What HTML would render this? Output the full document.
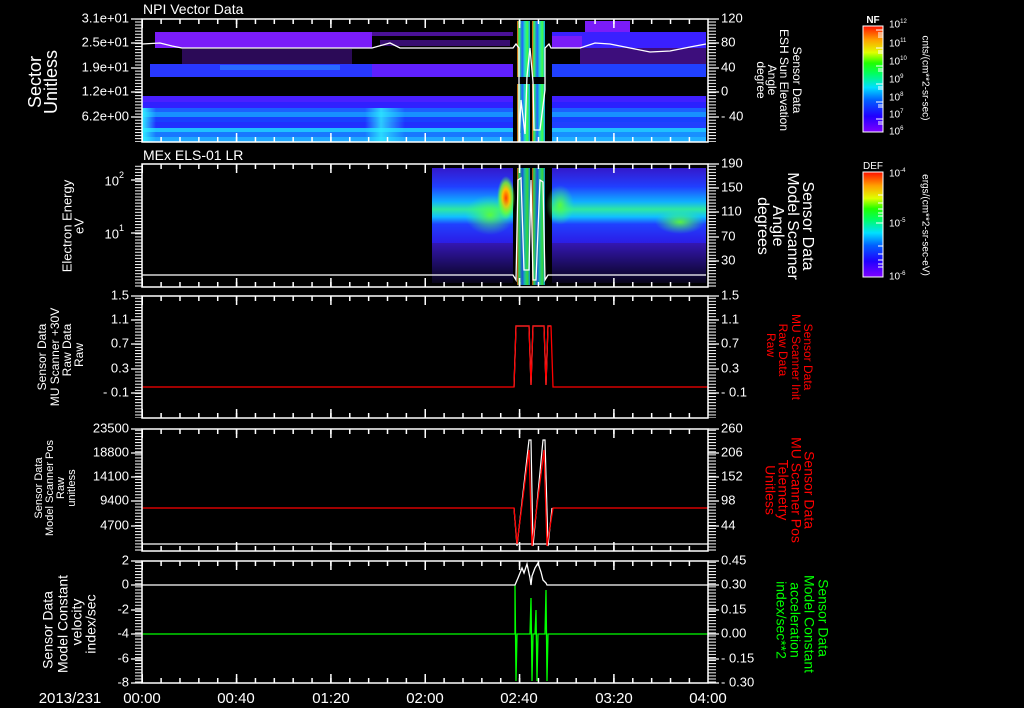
<!DOCTYPE html>
<html><head><meta charset="utf-8"><style>
html,body{margin:0;padding:0;background:#000;}
svg{display:block;}
text{font-family:"Liberation Sans",sans-serif;fill:#fff;}
</style></head><body>
<svg width="1024" height="708" viewBox="0 0 1024 708" xmlns="http://www.w3.org/2000/svg">
<defs>
<pattern id="vt" patternUnits="userSpaceOnUse" x="141.5" y="0" width="18.867" height="20"><rect x="0" y="0" width="1.5" height="20" fill="#fff"/></pattern>
<pattern id="vtM" patternUnits="userSpaceOnUse" x="141.5" y="0" width="94.33" height="20"><rect x="0" y="0" width="1.5" height="20" fill="#fff"/></pattern>
<pattern id="ht" patternUnits="userSpaceOnUse" x="0" y="0" width="20" height="3.07"><rect x="0" y="0" width="20" height="1" fill="#fff"/></pattern>
<linearGradient id="cb" x1="0" y1="1" x2="0" y2="0">
<stop offset="0" stop-color="#8000ff"/><stop offset="0.15" stop-color="#2000ff"/><stop offset="0.3" stop-color="#0060ff"/><stop offset="0.42" stop-color="#00e0ff"/><stop offset="0.55" stop-color="#00ff60"/><stop offset="0.65" stop-color="#20ff00"/><stop offset="0.75" stop-color="#e0ff00"/><stop offset="0.87" stop-color="#ffa000"/><stop offset="1" stop-color="#ff1000"/>
</linearGradient>
<linearGradient id="spec" x1="0" y1="0" x2="0" y2="1">
<stop offset="0" stop-color="#4020ff" stop-opacity="0.8"/><stop offset="0.25" stop-color="#2040ff"/><stop offset="0.45" stop-color="#10b0ff"/><stop offset="0.55" stop-color="#30e8a0"/><stop offset="0.65" stop-color="#10c0ff"/><stop offset="0.75" stop-color="#2040ff"/><stop offset="1" stop-color="#3020ff" stop-opacity="0.9"/>
</linearGradient>
<linearGradient id="sparse" x1="0" y1="0" x2="0" y2="1">
<stop offset="0" stop-color="#4a20ff" stop-opacity="0.7"/><stop offset="1" stop-color="#4a20ff" stop-opacity="0.1"/>
</linearGradient>
<radialGradient id="hot"><stop offset="0" stop-color="#ff4000"/><stop offset="0.4" stop-color="#ffc000"/><stop offset="0.7" stop-color="#80ff20" stop-opacity="0.8"/><stop offset="1" stop-color="#40ff60" stop-opacity="0"/></radialGradient>
<radialGradient id="grn"><stop offset="0" stop-color="#60ff30" stop-opacity="0.9"/><stop offset="1" stop-color="#30ff80" stop-opacity="0"/></radialGradient>
<linearGradient id="strip" x1="0" y1="0" x2="1" y2="0">
<stop offset="0" stop-color="#ff4000"/><stop offset="0.15" stop-color="#30ff60"/><stop offset="0.4" stop-color="#2060ff"/><stop offset="0.6" stop-color="#20e0c0"/><stop offset="0.8" stop-color="#40ff40"/><stop offset="1" stop-color="#10a0ff"/>
</linearGradient>
<linearGradient id="cyanL" x1="0" y1="0" x2="1" y2="0"><stop offset="0" stop-color="#30f0ff"/><stop offset="1" stop-color="#30f0ff" stop-opacity="0"/></linearGradient>
<linearGradient id="cyanR" x1="0" y1="0" x2="1" y2="0"><stop offset="0" stop-color="#30f0ff" stop-opacity="0"/><stop offset="0.4" stop-color="#30f0ff" stop-opacity="0.8"/><stop offset="1" stop-color="#30f0ff" stop-opacity="0"/></linearGradient>
</defs>

<!-- PANEL 1 DATA -->
<g>
<rect x="155" y="32" width="217" height="16" fill="#7a1cf8"/>
<rect x="372" y="32" width="141" height="4" fill="#7a1cf8" opacity="0.6"/>
<rect x="380" y="40" width="130" height="6" fill="#7a1cf8" opacity="0.45"/>
<rect x="182" y="49" width="170" height="15" fill="#7a1cf8" opacity="0.35"/>
<rect x="150" y="64" width="222" height="13" fill="#2838ff"/>
<rect x="220" y="65" width="120" height="5" fill="#2a80ff" opacity="0.7"/>
<rect x="372" y="64" width="141" height="13" fill="#6020ff"/>
<rect x="142" y="96" width="371" height="6" fill="#4a20ff"/>
<rect x="142" y="102" width="371" height="6" fill="#3020ff"/>
<rect x="142" y="108" width="371" height="4" fill="#1c60ff"/>
<rect x="142" y="112" width="371" height="5" fill="#1890ff"/>
<rect x="142" y="117" width="371" height="5" fill="#1840ff"/>
<rect x="142" y="122" width="371" height="6" fill="#2030ff"/>
<rect x="142" y="128" width="371" height="4" fill="#20c0ff"/>
<rect x="142" y="132" width="371" height="5" fill="#1878ff"/>
<rect x="142" y="137" width="371" height="5" fill="#20a8ff"/>
<rect x="142" y="108" width="14" height="34" fill="url(#cyanL)"/>
<rect x="365" y="108" width="40" height="34" fill="url(#cyanR)"/>
<rect x="585" y="21" width="45" height="11" fill="#7a1cf8"/>
<rect x="552" y="32" width="154" height="16" fill="#3a20ff"/>
<rect x="552" y="36" width="30" height="12" fill="#7a1cf8"/>
<rect x="580" y="48" width="126" height="16" fill="#7a1cf8" opacity="0.5"/>
<rect x="552" y="64" width="154" height="13" fill="#2040ff"/>
<rect x="552" y="96" width="154" height="6" fill="#4020ff"/>
<rect x="552" y="102" width="154" height="6" fill="#2a20ff"/>
<rect x="552" y="108" width="154" height="4" fill="#1c60ff"/>
<rect x="552" y="112" width="154" height="5" fill="#1890ff"/>
<rect x="552" y="117" width="154" height="5" fill="#1840ff"/>
<rect x="552" y="122" width="154" height="6" fill="#2040ff"/>
<rect x="552" y="128" width="154" height="4" fill="#20c0ff"/>
<rect x="552" y="132" width="154" height="5" fill="#1890ff"/>
<rect x="552" y="137" width="154" height="5" fill="#20b0ff"/>
<rect x="517" y="21" width="13" height="56" fill="url(#strip)"/>
<rect x="532" y="21" width="13" height="56" fill="url(#strip)"/>
<rect x="517" y="84" width="13" height="58" fill="url(#strip)"/>
<rect x="532" y="84" width="13" height="58" fill="url(#strip)"/>
<polyline fill="none" stroke="#fff" stroke-width="1.3" points="142,44 160,43 172,46 182,48 372,48 390,43 400,48 513,48 516,44 519,48 519,142 521,100 525,134 527,76 530,48 533,82 534,130 540,130 545,90 545,48 549,44 551,48 580,48 595,43 610,44 630,48 650,52 670,51 690,47 706,44"/>
</g>

<!-- PANEL 2 DATA -->
<g>
<rect x="432" y="168" width="81" height="75" fill="url(#spec)"/>
<rect x="552" y="168" width="154" height="75" fill="url(#spec)"/>
<rect x="432" y="243" width="81" height="40" fill="url(#sparse)"/>
<rect x="552" y="243" width="154" height="40" fill="url(#sparse)"/>
<rect x="517" y="168" width="13" height="117" fill="url(#strip)" opacity="0.85"/>
<rect x="532" y="168" width="13" height="117" fill="url(#strip)" opacity="0.85"/>
<ellipse cx="506" cy="198" rx="9" ry="22" fill="url(#hot)"/>
<ellipse cx="490" cy="215" rx="25" ry="20" fill="url(#grn)"/>
<ellipse cx="560" cy="205" rx="14" ry="20" fill="url(#grn)"/>
<ellipse cx="680" cy="222" rx="25" ry="12" fill="url(#grn)"/>
<polyline fill="none" stroke="#fff" stroke-width="1.3" points="142,275 513,275 516,280 518,180 521,178 524,270 529,270 531,180 533,280 536,280 540,180 543,182 545,280 548,275 706,275"/>
</g>

<!-- PANEL 3 DATA -->
<polyline fill="none" stroke="#fff" stroke-width="1.2" points="514,387 516,326 529,326 531,385 533,326 544,326 546,385 548,326 551,326"/>
<polyline fill="none" stroke="#f00" stroke-width="1.3" points="142,387 514,387 516,326 529,326 531,385 533,326 544,326 546,385 548,326 551,326 553,387 708,387"/>

<!-- PANEL 4 DATA -->
<line x1="142" y1="544" x2="708" y2="544" stroke="#fff" stroke-width="1.3"/>
<polyline fill="none" stroke="#fff" stroke-width="1.2" points="514,508 517,546 529,440 531,440 533,546 543,440 545,440 548,546 552,508"/>
<polyline fill="none" stroke="#f00" stroke-width="1.3" points="142,508 514,508 517,544 529,450 532,546 544,450 547,546 553,508 708,508"/>

<!-- PANEL 5 DATA -->
<polyline fill="none" stroke="#0f0" stroke-width="1.3" points="142,634 515,634 515,585 516,681 517,634 530,634 531,598 532,681 533,634 535,634 536,610 537,681 538,634 545,634 546,590 547,681 548,634 708,634"/>
<polyline fill="none" stroke="#fff" stroke-width="1.3" points="142,585 515,585 518,578 522,568 524,573 527,564 530,578 531,585 532,576 535,568 538,563 541,572 543,580 546,583 547,585 708,585"/>

<!-- AXES -->
<g fill="none" stroke="#fff" stroke-width="1.5">
<rect x="142" y="19" width="566" height="123"/>
<rect x="142" y="164" width="566" height="123"/>
<rect x="142" y="296" width="566" height="122"/>
<rect x="142" y="429" width="566" height="122"/>
<rect x="142" y="561" width="566" height="122"/>
</g>
<g>
<rect x="142" y="19" width="566" height="5" fill="url(#vt)"/><rect x="142" y="19" width="566" height="9" fill="url(#vtM)"/>
<rect x="142" y="137" width="566" height="5" fill="url(#vt)"/><rect x="142" y="133" width="566" height="9" fill="url(#vtM)"/>
<rect x="142" y="164" width="566" height="5" fill="url(#vt)"/><rect x="142" y="164" width="566" height="9" fill="url(#vtM)"/>
<rect x="142" y="282" width="566" height="5" fill="url(#vt)"/><rect x="142" y="278" width="566" height="9" fill="url(#vtM)"/>
<rect x="142" y="296" width="566" height="5" fill="url(#vt)"/><rect x="142" y="296" width="566" height="9" fill="url(#vtM)"/>
<rect x="142" y="413" width="566" height="5" fill="url(#vt)"/><rect x="142" y="409" width="566" height="9" fill="url(#vtM)"/>
<rect x="142" y="429" width="566" height="5" fill="url(#vt)"/><rect x="142" y="429" width="566" height="9" fill="url(#vtM)"/>
<rect x="142" y="546" width="566" height="5" fill="url(#vt)"/><rect x="142" y="542" width="566" height="9" fill="url(#vtM)"/>
<rect x="142" y="561" width="566" height="5" fill="url(#vt)"/><rect x="142" y="561" width="566" height="9" fill="url(#vtM)"/>
<rect x="142" y="678" width="566" height="5" fill="url(#vt)"/><rect x="142" y="674" width="566" height="9" fill="url(#vtM)"/>
<rect x="135" y="19" width="7" height="123" fill="url(#ht)"/><rect x="708" y="19" width="8" height="123" fill="url(#ht)"/>
<rect x="135" y="164" width="7" height="123" fill="url(#ht)"/><rect x="708" y="164" width="8" height="123" fill="url(#ht)"/>
<rect x="135" y="296" width="7" height="122" fill="url(#ht)"/><rect x="708" y="296" width="8" height="122" fill="url(#ht)"/>
<rect x="135" y="429" width="7" height="122" fill="url(#ht)"/><rect x="708" y="429" width="8" height="122" fill="url(#ht)"/>
<rect x="135" y="561" width="7" height="122" fill="url(#ht)"/><rect x="708" y="561" width="8" height="122" fill="url(#ht)"/>
</g>
<g stroke="#fff" stroke-width="1.3">
<path d="M131 19H142M131 43H142M131 68H142M131 92H142M131 117H142 M708 19H719M708 43H719M708 68H719M708 92H719M708 117H719"/>
<path d="M131 180H142M131 233H142 M708 164H719M708 188H719M708 212H719M708 237H719M708 261H719"/>
<path d="M131 296H142M131 320H142M131 344H142M131 369H142M131 393H142 M708 296H719M708 320H719M708 344H719M708 369H719M708 393H719"/>
<path d="M131 429H142M131 453H142M131 477H142M131 501H142M131 526H142 M708 429H719M708 453H719M708 477H719M708 501H719M708 526H719"/>
<path d="M131 561H142M131 585H142M131 610H142M131 634H142M131 659H142M131 683H142 M708 561H719M708 585H719M708 610H719M708 634H719M708 659H719M708 683H719"/>
</g>

<text x="143" y="14" font-size="14">NPI Vector Data</text>
<text x="143" y="160" font-size="14">MEx ELS-01 LR</text>

<g font-size="13" text-anchor="end" dominant-baseline="middle">
<text x="129" y="19">3.1e+01</text><text x="129" y="43">2.5e+01</text><text x="129" y="68">1.9e+01</text><text x="129" y="92">1.2e+01</text><text x="129" y="117">6.2e+00</text>
<text x="124" y="182">10<tspan font-size="9" dy="-6">2</tspan></text><text x="124" y="235">10<tspan font-size="9" dy="-6">1</tspan></text>
<text x="129" y="296">1.5</text><text x="129" y="320">1.1</text><text x="129" y="344">0.7</text><text x="129" y="369">0.3</text><text x="129" y="393">- 0.1</text>
<text x="129" y="429">23500</text><text x="129" y="453">18800</text><text x="129" y="477">14100</text><text x="129" y="501">9400</text><text x="129" y="526">4700</text>
<text x="129" y="561">2</text><text x="129" y="585">0</text><text x="129" y="610">-2</text><text x="129" y="634">-4</text><text x="129" y="659">-6</text><text x="129" y="683">-8</text>
</g>
<g font-size="13" dominant-baseline="middle">
<text x="721" y="19">120</text><text x="721" y="43">80</text><text x="721" y="68">40</text><text x="721" y="92">0</text><text x="721" y="117">- 40</text>
<text x="721" y="164">190</text><text x="721" y="188">150</text><text x="721" y="212">110</text><text x="721" y="237">70</text><text x="721" y="261">30</text>
<text x="721" y="296">1.5</text><text x="721" y="320">1.1</text><text x="721" y="344">0.7</text><text x="721" y="369">0.3</text><text x="721" y="393">- 0.1</text>
<text x="721" y="429">260</text><text x="721" y="453">206</text><text x="721" y="477">152</text><text x="721" y="501">98</text><text x="721" y="526">44</text>
<text x="721" y="561">0.45</text><text x="721" y="585">0.30</text><text x="721" y="610">0.15</text><text x="721" y="634">0.00</text><text x="721" y="659">- 0.15</text><text x="721" y="683">- 0.30</text>
</g>

<g font-size="15" text-anchor="middle">
<text x="142" y="703">00:00</text><text x="236" y="703">00:40</text><text x="331" y="703">01:20</text><text x="425" y="703">02:00</text><text x="519" y="703">02:40</text><text x="614" y="703">03:20</text><text x="708" y="703">04:00</text>
<text x="70" y="703">2013/231</text>
</g>

<g text-anchor="middle" dominant-baseline="middle">
<text font-size="18" transform="translate(36,82) rotate(-90)">Sector</text>
<text font-size="18" transform="translate(52,82) rotate(-90)">Unitless</text>
<text font-size="13" transform="translate(68,226) rotate(-90)">Electron Energy</text>
<text font-size="13" transform="translate(80,226) rotate(-90)">eV</text>
<text font-size="12" transform="translate(43,357) rotate(-90)">Sensor Data</text>
<text font-size="12" transform="translate(56,357) rotate(-90)">MU Scanner +30V</text>
<text font-size="12" transform="translate(68,350) rotate(-90)">Raw Data</text>
<text font-size="12" transform="translate(80,355) rotate(-90)">Raw</text>
<text font-size="11" transform="translate(39,488) rotate(-90)">Sensor Data</text>
<text font-size="11" transform="translate(50,488) rotate(-90)">Model Scanner Pos</text>
<text font-size="11" transform="translate(61,488) rotate(-90)">Raw</text>
<text font-size="11" transform="translate(72,488) rotate(-90)">unitless</text>
<text font-size="14" transform="translate(49,630) rotate(-90)">Sensor Data</text>
<text font-size="14" transform="translate(64,624) rotate(-90)">Model Constant</text>
<text font-size="14" transform="translate(78,622) rotate(-90)">velocity</text>
<text font-size="14" transform="translate(92,624) rotate(-90)">index/sec</text>
</g>

<g text-anchor="middle" dominant-baseline="middle">
<text font-size="12" transform="translate(796,80) rotate(90)">Sensor Data</text>
<text font-size="12" transform="translate(783,80) rotate(90)">ESH Sun Elevation</text>
<text font-size="12" transform="translate(771,80) rotate(90)">Angle</text>
<text font-size="12" transform="translate(760,80) rotate(90)">degree</text>
<text font-size="16" transform="translate(807,226) rotate(90)">Sensor Data</text>
<text font-size="16" transform="translate(792,226) rotate(90)">Model Scanner</text>
<text font-size="16" transform="translate(777,226) rotate(90)">Angle</text>
<text font-size="16" transform="translate(762,226) rotate(90)">degrees</text>
<text font-size="12" style="fill:#f00" transform="translate(807,357) rotate(90)">Sensor Data</text>
<text font-size="12" style="fill:#f00" transform="translate(795,357) rotate(90)">MU Scanner Init</text>
<text font-size="12" style="fill:#f00" transform="translate(782,350) rotate(90)">Raw Data</text>
<text font-size="12" style="fill:#f00" transform="translate(770,345) rotate(90)">Raw</text>
<text font-size="14" style="fill:#f00" transform="translate(808,490) rotate(90)">Sensor Data</text>
<text font-size="14" style="fill:#f00" transform="translate(795,490) rotate(90)">MU Scanner Pos</text>
<text font-size="14" style="fill:#f00" transform="translate(782,490) rotate(90)">Telemetry</text>
<text font-size="14" style="fill:#f00" transform="translate(769,490) rotate(90)">Unitless</text>
<text font-size="14" style="fill:#0f0" transform="translate(822,618) rotate(90)">Sensor Data</text>
<text font-size="14" style="fill:#0f0" transform="translate(808,624) rotate(90)">Model Constant</text>
<text font-size="14" style="fill:#0f0" transform="translate(794,620) rotate(90)">acceleration</text>
<text font-size="14" style="fill:#0f0" transform="translate(780,620) rotate(90)">index/sec**2</text>
</g>

<rect x="863" y="26" width="20" height="106" fill="url(#cb)" stroke="#fff" stroke-width="1"/>
<rect x="863" y="172" width="20" height="105" fill="url(#cb)" stroke="#fff" stroke-width="1"/>
<g stroke="#fff" stroke-width="1">
<path d="M876 30H883M878 33H883M878 35H883M878 37H883M876 48H883M878 51H883M878 53H883M876 66H883M878 69H883M878 71H883M876 84H883M878 87H883M878 89H883M876 102H883M878 105H883M878 107H883M876 119H883M878 122H883M878 124H883"/>
<path d="M876 223H883M878 195H883M878 203H883M878 209H883M878 213H883M878 216H883M878 246H883M878 254H883M878 260H883M878 264H883M878 267H883"/>
</g>
<g font-size="10" text-anchor="middle"><text x="873" y="23" font-weight="bold">NF</text><text x="873" y="169">DEF</text></g>
<g font-size="10" dominant-baseline="middle">
<text x="889" y="25">10<tspan font-size="6" dy="-4">12</tspan></text>
<text x="889" y="44">10<tspan font-size="6" dy="-4">11</tspan></text>
<text x="889" y="62">10<tspan font-size="6" dy="-4">10</tspan></text>
<text x="889" y="80">10<tspan font-size="6" dy="-4">9</tspan></text>
<text x="889" y="98">10<tspan font-size="6" dy="-4">8</tspan></text>
<text x="889" y="115">10<tspan font-size="6" dy="-4">7</tspan></text>
<text x="889" y="132">10<tspan font-size="6" dy="-4">6</tspan></text>
<text x="889" y="174">10<tspan font-size="6" dy="-4">-4</tspan></text>
<text x="889" y="224">10<tspan font-size="6" dy="-4">-5</tspan></text>
<text x="889" y="277">10<tspan font-size="6" dy="-4">-6</tspan></text>
</g>
<g font-size="10" text-anchor="middle" dominant-baseline="middle">
<text transform="translate(925,78) rotate(90)">cnts/(cm**2-sr-sec)</text>
<text transform="translate(925,225) rotate(90)">ergs/(cm**2-sr-sec-eV)</text>
</g>
</svg>
</body></html>
